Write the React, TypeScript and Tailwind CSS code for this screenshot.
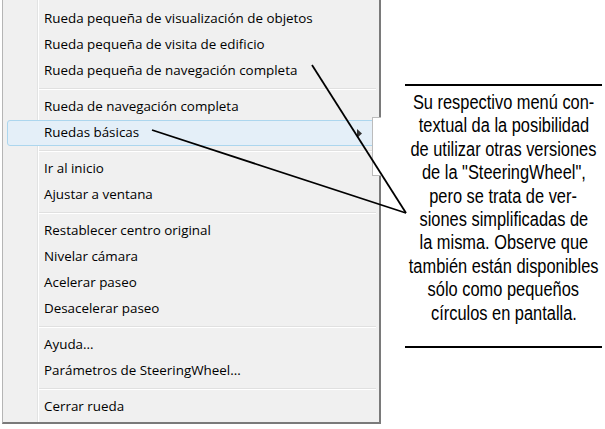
import React from "react";

type Item = { t: string; sep?: boolean; hl?: boolean; arrow?: boolean };

const items: Item[] = [
  { t: "Rueda pequeña de visualización de objetos" },
  { t: "Rueda pequeña de visita de edificio" },
  { t: "Rueda pequeña de navegación completa" },
  { t: "", sep: true },
  { t: "Rueda de navegación completa" },
  { t: "Ruedas básicas", hl: true, arrow: true },
  { t: "", sep: true },
  { t: "Ir al inicio" },
  { t: "Ajustar a ventana" },
  { t: "", sep: true },
  { t: "Restablecer centro original" },
  { t: "Nivelar cámara" },
  { t: "Acelerar paseo" },
  { t: "Desacelerar paseo" },
  { t: "", sep: true },
  { t: "Ayuda..." },
  { t: "Parámetros de SteeringWheel..." },
  { t: "", sep: true },
  { t: "Cerrar rueda" },
];

const lines = [
  "Su respectivo menú con-",
  "textual da la posibilidad",
  "de utilizar otras versiones",
  'de la "SteeringWheel",',
  "pero se trata de ver-",
  "siones simplificadas de",
  "la misma. Observe que",
  "también están disponibles",
  "sólo como pequeños",
  "círculos en pantalla.",
];

export default function App() {
  return (
    <div className="relative w-[605px] h-[429px] bg-white overflow-hidden flex">
      <div className="ml-[2px] w-[379px] h-[424px] bg-[#f0f0f0] border-l border-[#b5b5b5] border-r-2 border-r-[#7a7a7a] border-b-2 border-b-[#7a7a7a] pt-[6px] relative">
        <div className="absolute left-[34px] top-0 bottom-0 w-px bg-[#e2e3e3]" />
        <div className="absolute left-[35px] top-0 bottom-0 w-px bg-white" />
        {items.map((it, i) =>
          it.sep ? (
            <div key={i} className="h-[10px] flex items-center pl-[36px] pr-[3px]">
              <div className="w-full h-px bg-[#e0e0e0] border-b border-white box-content" />
            </div>
          ) : (
            <div
              key={i}
              className={
                "relative h-[26px] mx-[4px] flex items-center pl-[36px] rounded-[3px] " +
                (it.hl ? "bg-[#e4eff8] border border-[#acd6ee]" : "border border-transparent")
              }
              style={{ fontFamily: '"Open Sans", "Noto Sans", sans-serif' }}
            >
              <span className="text-[13.4px] text-black leading-none">{it.t}</span>
              {it.arrow && (
                <svg className="absolute right-[12px] top-[8px]" width="5" height="9" viewBox="0 0 5 9">
                  <path d="M0 0 L5 4.5 L0 9 Z" fill="#333" />
                </svg>
              )}
            </div>
          )
        )}
        <div className="absolute left-[369px] top-[117px] w-[9px] h-[59px] bg-white border border-[#bcbcbc] border-r-0" />
      </div>

      <div className="ml-[24px] mt-[84px] w-[197px] flex flex-col">
        <div className="h-[2px] bg-black" />
        <div
          className="pt-[5px] text-center text-black text-[20px] leading-[23.4px]"
          style={{ fontFamily: '"Liberation Sans", Arial, sans-serif' }}
        >
          {lines.map((l, i) => (
            <div key={i} className="flex justify-center">
              <span className="whitespace-nowrap inline-block scale-x-[0.82] origin-center">{l}</span>
            </div>
          ))}
        </div>
        <div className="mt-[21px] h-[2px] bg-black" />
      </div>

      <svg className="absolute inset-0 pointer-events-none" width="605" height="429" viewBox="0 0 605 429">
        <line x1="312" y1="65" x2="406" y2="213" stroke="#000" strokeWidth="1.8" />
        <line x1="152" y1="130" x2="406" y2="213" stroke="#000" strokeWidth="1.8" />
      </svg>
    </div>
  );
}
